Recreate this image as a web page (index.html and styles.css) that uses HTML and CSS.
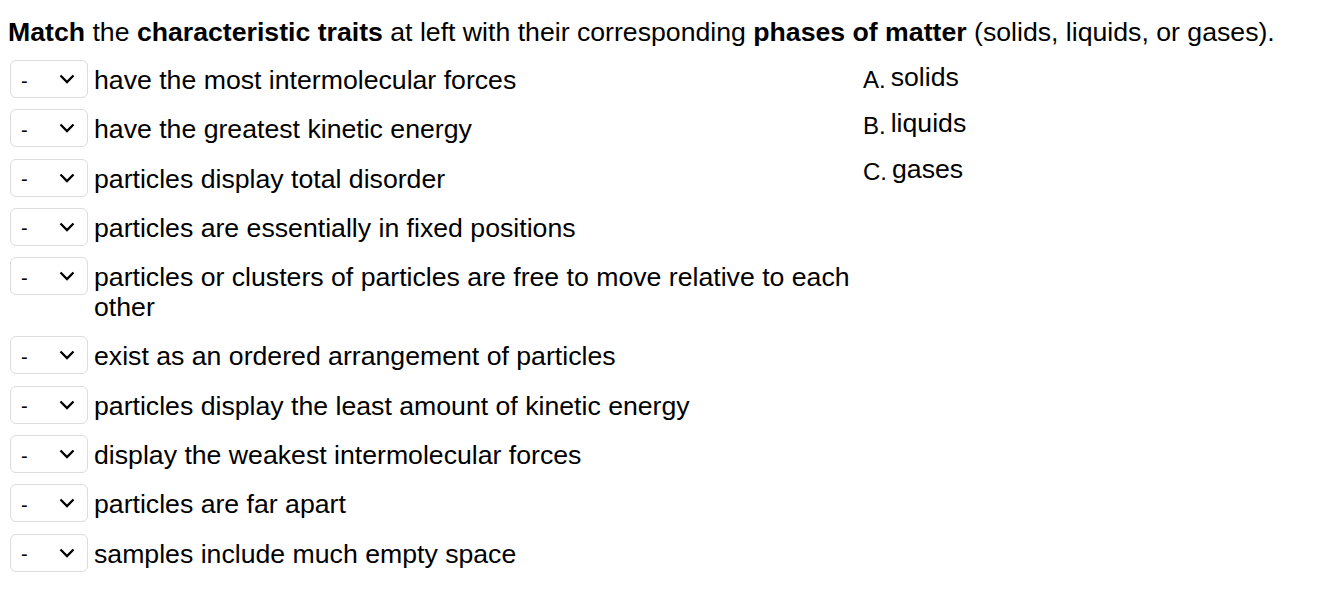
FILE: index.html
```html
<!DOCTYPE html>
<html lang="en">
<head>
  <meta charset="UTF-8" />
  <title>Phases of Matter</title>
  <link rel="stylesheet" href="styles.css">
</head>
<body>
  <p class="prompt"><b>Match</b> the <b>characteristic traits</b> at left with their corresponding <b>phases of matter</b> (solids, liquids, or gases).</p>

  <div class="match">
    <div class="items">
      <div class="item"><select class="pick"><option>-</option><option>A</option><option>B</option><option>C</option></select><span class="trait">have the most intermolecular forces</span></div>
      <div class="item"><select class="pick"><option>-</option><option>A</option><option>B</option><option>C</option></select><span class="trait">have the greatest kinetic energy</span></div>
      <div class="item"><select class="pick"><option>-</option><option>A</option><option>B</option><option>C</option></select><span class="trait">particles display total disorder</span></div>
      <div class="item"><select class="pick"><option>-</option><option>A</option><option>B</option><option>C</option></select><span class="trait">particles are essentially in fixed positions</span></div>
      <div class="item"><select class="pick"><option>-</option><option>A</option><option>B</option><option>C</option></select><span class="trait">particles or clusters of particles are free to move relative to each other</span></div>
      <div class="item"><select class="pick"><option>-</option><option>A</option><option>B</option><option>C</option></select><span class="trait">exist as an ordered arrangement of particles</span></div>
      <div class="item"><select class="pick"><option>-</option><option>A</option><option>B</option><option>C</option></select><span class="trait">particles display the least amount of kinetic energy</span></div>
      <div class="item"><select class="pick"><option>-</option><option>A</option><option>B</option><option>C</option></select><span class="trait">display the weakest intermolecular forces</span></div>
      <div class="item"><select class="pick"><option>-</option><option>A</option><option>B</option><option>C</option></select><span class="trait">particles are far apart</span></div>
      <div class="item"><select class="pick"><option>-</option><option>A</option><option>B</option><option>C</option></select><span class="trait">samples include much empty space</span></div>
    </div>

    <ul class="answers">
      <li><span class="letter">A.</span>solids</li>
      <li><span class="letter">B.</span>liquids</li>
      <li><span class="letter">C.</span>gases</li>
    </ul>
  </div>
</body>
</html>
```

FILE: styles.css
```css
body {
  margin: 0;
  padding: 0 8px;
  font-family: "Liberation Sans", Arial, sans-serif;
  font-size: 26.66px;
  color: #000;
  background: #fff;
}
.prompt {
  margin: 17px 0 13px;
  line-height: 30px;
}
.match {
  display: flex;
}
.items {
  width: 850px;
  display: flex;
  flex-direction: column;
  gap: 11.3px;
}
.item {
  display: flex;
  align-items: flex-start;
  line-height: 30px;
}
.pick {
  flex: none;
  box-sizing: border-box;
  width: 78px;
  height: 38px;
  margin: 0 6px 0 2px;
  padding: 3px 0 0 10px;
  border: 1px solid #dcdcdc;
  border-radius: 6px;
  background: #fff url("data:image/svg+xml,%3Csvg xmlns='http://www.w3.org/2000/svg' width='16' height='10'%3E%3Cpath d='M1.5 1.5l6.5 6.5 6.5-6.5' fill='none' stroke='%23000' stroke-width='2.3'/%3E%3C/svg%3E") no-repeat right 12px center;
  appearance: none;
  font-family: inherit;
  font-size: 20px;
  color: #000;
}
.trait {
  padding: 5px 0 3px;
}
.answers {
  list-style: none;
  margin: 0;
  padding: 2px 0 0 5px;
  display: flex;
  flex-direction: column;
  gap: 15px;
}
.answers li {
  line-height: 30px;
  height: 31px;
}
.letter {
  font-size: 24px;
  margin-right: 5px;
  position: relative;
  top: 2px;
}
```
